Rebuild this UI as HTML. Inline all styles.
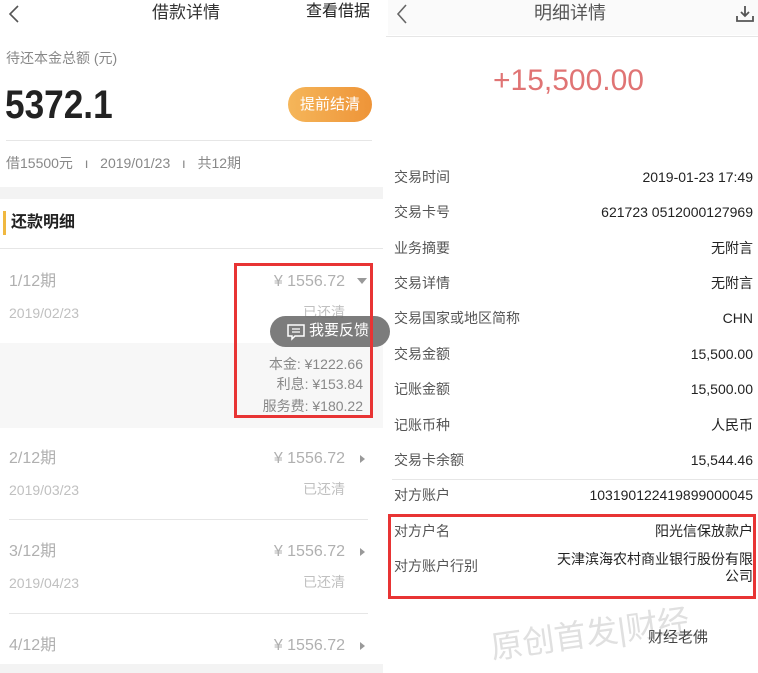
<!DOCTYPE html>
<html><head><meta charset="utf-8"><style>
*{margin:0;padding:0;box-sizing:border-box}
body{width:758px;height:673px;position:relative;overflow:hidden;background:#fff;font-family:"Liberation Sans","Noto Sans CJK SC",sans-serif}
.a{position:absolute;white-space:nowrap;line-height:1}
.r{text-align:right}
.g{color:#b0b0b0;font-size:16px}
.d{color:#c0c0c0;font-size:14px}
.l{position:absolute;background:#e6e6e6;height:1px}
.lab{position:absolute;left:394px;font-size:14px;color:#555;line-height:1}
.val{position:absolute;right:5px;font-size:14px;color:#222;line-height:1;text-align:right}
</style></head><body>
<!-- LEFT -->
<svg style="position:absolute;left:8px;top:5px" width="12" height="18" viewBox="0 0 12 18"><path d="M10 1L2 9l8 8" fill="none" stroke="#555" stroke-width="1.6"/></svg>
<div class="a" style="left:152px;top:4px;font-size:17px;color:#333">借款详情</div>
<div class="a" style="left:306px;top:4px;font-size:16px;color:#222">查看借据</div>
<div class="a" style="left:6px;top:51px;font-size:14px;color:#888">待还本金总额 (元)</div>
<div class="a" style="left:5px;top:85px;font-size:40px;color:#222;font-weight:bold;transform:scaleX(.88);transform-origin:left">5372.1</div>
<div class="a" style="left:288px;top:87px;width:84px;height:35px;border-radius:18px;background:linear-gradient(90deg,#f5b65a,#ee9438);color:#fff;font-size:15px;line-height:35px;text-align:center">提前结清</div>
<div class="l" style="left:6px;top:140px;width:366px"></div>
<div class="a" style="left:6px;top:156px;font-size:14px;color:#888">借15500元 &nbsp;&nbsp;ı&nbsp;&nbsp; 2019/01/23 &nbsp;&nbsp;ı&nbsp;&nbsp; 共12期</div>
<div style="position:absolute;left:0;top:187px;width:383px;height:12px;background:#f3f3f3"></div>
<div style="position:absolute;left:3px;top:211px;width:3px;height:24px;background:#f0b840"></div>
<div class="a" style="left:11px;top:215px;font-size:16px;color:#222;font-weight:bold">还款明细</div>
<div class="l" style="left:0;top:248px;width:383px"></div>

<div class="a g" style="left:9px;top:274px">1/12期</div>
<div class="a g r" style="right:413px;top:274px">¥ 1556.72</div>
<div class="a" style="left:357px;top:278px;width:0;height:0;border-left:5px solid transparent;border-right:5px solid transparent;border-top:6px solid #999"></div>
<div class="a d" style="left:9px;top:306px">2019/02/23</div>
<div class="a d" style="left:303px;top:305px">已还清</div>
<div style="position:absolute;left:0;top:343px;width:383px;height:85px;background:#f7f7f7"></div>
<div class="a r" style="right:395px;top:357px;font-size:14px;color:#888">本金: ¥1222.66</div>
<div class="a r" style="right:395px;top:377px;font-size:14px;color:#888">利息: ¥153.84</div>
<div class="a r" style="right:395px;top:399px;font-size:14px;color:#888">服务费: ¥180.22</div>
<div style="position:absolute;left:270px;top:316px;width:120px;height:31px;border-radius:16px;background:rgba(110,110,110,.9)"></div>
<svg style="position:absolute;left:286px;top:323px" width="20" height="18" viewBox="0 0 20 18"><path d="M2 2h16v11H9l-3 3v-3H2z" fill="none" stroke="#fff" stroke-width="1.5"/><path d="M6 6h8M6 9h8" stroke="#fff" stroke-width="1.3"/></svg>
<div class="a" style="left:309px;top:323px;font-size:15px;color:#fff">我要反馈</div>
<div style="position:absolute;left:234px;top:263px;width:139px;height:155px;border:3px solid #e83434"></div>

<div class="a g" style="left:9px;top:451px">2/12期</div>
<div class="a g r" style="right:413px;top:451px">¥ 1556.72</div>
<div class="a" style="left:360px;top:455px;border-top:4px solid transparent;border-bottom:4px solid transparent;border-left:5px solid #999"></div>
<div class="a d" style="left:9px;top:483px">2019/03/23</div>
<div class="a d" style="left:303px;top:482px">已还清</div>
<div class="l" style="left:9px;top:519px;width:359px"></div>
<div class="a g" style="left:9px;top:544px">3/12期</div>
<div class="a g r" style="right:413px;top:544px">¥ 1556.72</div>
<div class="a" style="left:360px;top:548px;border-top:4px solid transparent;border-bottom:4px solid transparent;border-left:5px solid #999"></div>
<div class="a d" style="left:9px;top:576px">2019/04/23</div>
<div class="a d" style="left:303px;top:575px">已还清</div>
<div class="l" style="left:9px;top:613px;width:359px"></div>
<div class="a g" style="left:9px;top:638px">4/12期</div>
<div class="a g r" style="right:413px;top:638px">¥ 1556.72</div>
<div class="a" style="left:360px;top:642px;border-top:4px solid transparent;border-bottom:4px solid transparent;border-left:5px solid #999"></div>
<div style="position:absolute;left:0;top:664px;width:383px;height:9px;background:#f3f3f3"></div>

<!-- RIGHT -->
<div style="position:absolute;left:388px;top:0;width:370px;height:35px;background:#fafafa"></div>
<svg style="position:absolute;left:396px;top:4px" width="12" height="20" viewBox="0 0 12 20"><path d="M10 1L2 10l8 9" fill="none" stroke="#666" stroke-width="1.6"/></svg>
<div class="a" style="left:534px;top:4px;font-size:18px;color:#555">明细详情</div>
<svg style="position:absolute;left:735px;top:4px" width="20" height="20" viewBox="0 0 20 20"><path d="M10 2v10M6 8l4 4 4-4M2 12v5h16v-5" fill="none" stroke="#555" stroke-width="1.8"/></svg>
<div class="l" style="left:386px;top:36px;width:372px"></div>
<div class="a" style="left:493px;top:66px;font-size:30px;color:#e07474">+15,500.00</div>

<div class="lab" style="top:170px">交易时间</div><div class="val" style="top:170px">2019-01-23 17:49</div>
<div class="lab" style="top:205px">交易卡号</div><div class="val" style="top:205px">621723 0512000127969</div>
<div class="lab" style="top:241px">业务摘要</div><div class="val" style="top:241px">无附言</div>
<div class="lab" style="top:276px">交易详情</div><div class="val" style="top:276px">无附言</div>
<div class="lab" style="top:311px">交易国家或地区简称</div><div class="val" style="top:311px">CHN</div>
<div class="lab" style="top:347px">交易金额</div><div class="val" style="top:347px">15,500.00</div>
<div class="lab" style="top:382px">记账金额</div><div class="val" style="top:382px">15,500.00</div>
<div class="lab" style="top:418px">记账币种</div><div class="val" style="top:418px">人民币</div>
<div class="lab" style="top:453px">交易卡余额</div><div class="val" style="top:453px">15,544.46</div>
<div class="l" style="left:392px;top:479px;width:366px"></div>
<div class="lab" style="top:488px">对方账户</div><div class="val" style="top:488px">103190122419899000045</div>
<div class="lab" style="top:524px">对方户名</div><div class="val" style="top:524px">阳光信保放款户</div>
<div class="lab" style="top:559px">对方账户行别</div><div class="val" style="top:551px;line-height:17px">天津滨海农村商业银行股份有限<br>公司</div>
<div style="position:absolute;left:388px;top:514px;width:368px;height:85px;border:3px solid #e83434"></div>
<div class="a" style="left:490px;top:618px;font-size:32px;color:#e0e0e0;transform:rotate(-8deg)">原创首发|财经</div>
<div class="a" style="left:648px;top:630px;font-size:15px;color:#444">财经老佛</div>
</body></html>
